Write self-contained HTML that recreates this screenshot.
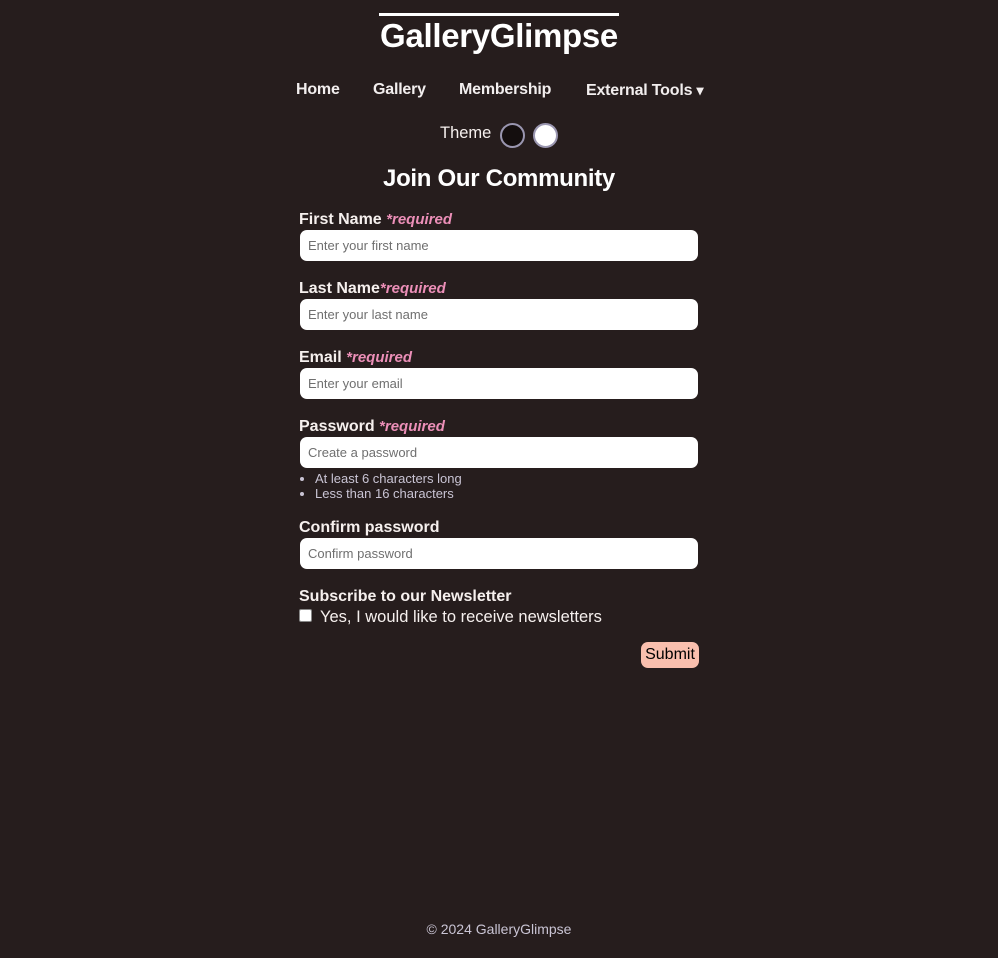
<!DOCTYPE html>
<html><head><meta charset="utf-8"><style>
*{box-sizing:border-box;margin:0;padding:0}
body{width:998px;height:958px;background:#261d1d;color:#fff;font-family:"Liberation Sans",sans-serif;position:relative;overflow:hidden}
.abs{position:absolute}
h1{position:absolute;left:379px;top:13px;width:240px;border-top:3px solid #fff;font-size:33px;font-weight:bold;text-align:center;line-height:40px;letter-spacing:-0.3px}
.nav{position:absolute;top:80px;height:20px;line-height:20px;font-size:16px;font-weight:bold;color:#f2eeee;letter-spacing:-0.2px;white-space:nowrap}
.circle{position:absolute;top:123px;width:25px;height:25px;border-radius:50%;border:2px solid #9a96b0}
label{position:absolute;left:299px;font-size:16px;font-weight:bold;color:#f6f0ee}
.req{color:#ec8fb8;font-style:italic;font-size:15px}
.in{position:absolute;left:300px;width:398px;height:31px;background:#fff;border-radius:7px;color:#6f6f6f;font-size:13px;padding:8px 8px 0}
ul{position:absolute;left:315px;top:471px;font-size:13px;color:#c9c4d4;line-height:15px;padding-left:0}
</style></head><body>
<h1>GalleryGlimpse</h1>
<div class="nav" style="left:296px">Home</div>
<div class="nav" style="left:373px">Gallery</div>
<div class="nav" style="left:459px">Membership</div>
<div class="nav" style="left:586px">External Tools <span style="font-size:14px;line-height:20px">▾</span></div>
<div class="abs" style="left:440px;top:124px;font-size:16.5px;color:#f6f0ee">Theme</div>
<div class="circle" style="left:500px;background:#140e0e"></div>
<div class="circle" style="left:533px;background:#fff"></div>
<div class="abs" style="left:369px;top:165px;width:260px;text-align:center;font-size:24px;font-weight:bold;letter-spacing:-0.3px">Join Our Community</div>
<label style="top:211px">First Name <span class="req">*required</span></label>
<div class="in" style="top:230px">Enter your first name</div>
<label style="top:280px">Last Name<span class="req">*required</span></label>
<div class="in" style="top:299px">Enter your last name</div>
<label style="top:349px">Email <span class="req">*required</span></label>
<div class="in" style="top:368px">Enter your email</div>
<label style="top:418px">Password <span class="req">*required</span></label>
<div class="in" style="top:437px">Create a password</div>
<ul><li>At least 6 characters long</li><li>Less than 16 characters</li></ul>
<label style="top:519px">Confirm password</label>
<div class="in" style="top:538px">Confirm password</div>
<label style="top:588px">Subscribe to our Newsletter</label>
<div class="abs" style="left:299px;top:609px;width:13px;height:13px;background:#fff;border:1px solid #888;border-radius:2px"></div>
<div class="abs" style="left:320px;top:608px;font-size:16.5px;color:#f6f0ee">Yes, I would like to receive newsletters</div>
<div class="abs" style="left:641px;top:642px;width:58px;height:26px;background:#f9bfae;border-radius:7px;color:#000;font-size:16px;text-align:center;line-height:26px">Submit</div>
<div class="abs" style="left:0;top:921px;width:998px;text-align:center;font-size:14px;color:#c9c4d4">© 2024 GalleryGlimpse</div>
</body></html>
